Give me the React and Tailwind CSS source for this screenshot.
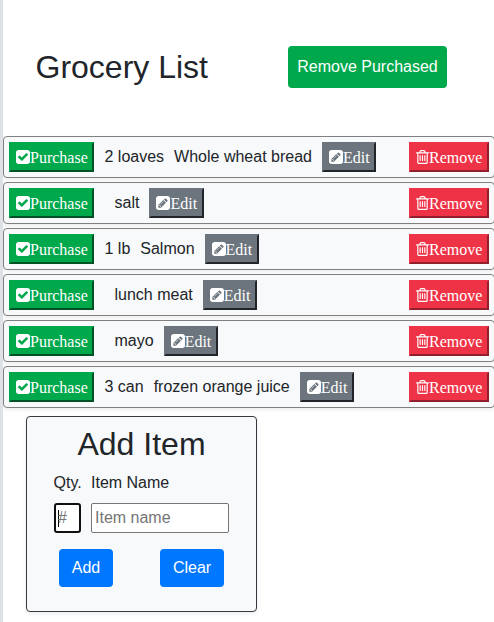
const items = [
  { qty: "2 loaves", name: "Whole wheat bread" },
  { qty: "", name: "salt" },
  { qty: "1 lb", name: "Salmon" },
  { qty: "", name: "lunch meat" },
  { qty: "", name: "mayo" },
  { qty: "3 can", name: "frozen orange juice" },
];

const small =
  "flex h-[30px] shrink-0 items-center border-2 pl-[5px] font-['Liberation_Serif',serif] text-base leading-6 text-white";

function CheckSquare() {
  return (
    <svg viewBox="128 128 1536 1536" fill="currentColor" className="h-[14px] w-[14px] shrink-0">
      <path d="M813 1299l614-614q19-19 19-45t-19-45l-102-102q-19-19-45-19t-45 19l-467 467-211-211q-19-19-45-19t-45 19l-102 102q-19 19-19 45t19 45l358 358q19 19 45 19t45-19zm851-883v960q0 119-84.5 203.5t-203.5 84.5h-960q-119 0-203.5-84.5t-84.5-203.5v-960q0-119 84.5-203.5t203.5-84.5h960q119 0 203.5 84.5t84.5 203.5z" />
    </svg>
  );
}

function PencilSquare() {
  return (
    <svg viewBox="0 0 1536 1536" fill="currentColor" className="h-[14px] w-[14px] shrink-0">
      <path d="M404 980l152 152-52 52h-56v-96h-96v-56zm414-390q14 13-3 30l-291 291q-17 17-30 3-14-13 3-30l291-291q17-17 30-3zm-274 690l544-544-288-288-544 544v288h288zm608-608l92-92q28-28 28-68t-28-68l-152-152q-28-28-68-28t-68 28l-92 92zm384-384v960q0 119-84.5 203.5t-203.5 84.5h-960q-119 0-203.5-84.5t-84.5-203.5v-960q0-119 84.5-203.5t203.5-84.5h960q119 0 203.5 84.5t84.5 203.5z" />
    </svg>
  );
}

function Trash() {
  return (
    <svg viewBox="192 128 1408 1536" fill="currentColor" className="h-[14px] w-[13px] shrink-0">
      <path d="M704 736v576q0 14-9 23t-23 9h-64q-14 0-23-9t-9-23v-576q0-14 9-23t23-9h64q14 0 23 9t9 23zm256 0v576q0 14-9 23t-23 9h-64q-14 0-23-9t-9-23v-576q0-14 9-23t23-9h64q14 0 23 9t9 23zm256 0v576q0 14-9 23t-23 9h-64q-14 0-23-9t-9-23v-576q0-14 9-23t23-9h64q14 0 23 9t9 23zm128 724v-948h-896v948q0 22 7 40.5t14.5 27 10.5 8.5h832q3 0 10.5-8.5t14.5-27 7-40.5zm-672-1076h448l-48-117q-7-9-17-11h-317q-10 2-17 11zm928 32v64q0 14-9 23t-23 9h-96v948q0 83-47 143.5t-113 60.5h-832q-66 0-113-58.5t-47-141.5v-952h-96q-14 0-23-9t-9-23v-64q0-14 9-23t23-9h309l70-167q15-37 54-63t79-26h320q40 0 79 26t54 63l70 167h309q14 0 23 9t9 23z" />
    </svg>
  );
}

function Row({ qty, name }) {
  return (
    <li className="flex h-[42px] items-center rounded border border-[#808080] bg-[#f8f9fa] px-[5px] shadow-[0_2px_4px_rgba(0,0,0,0.075)]">
      <button className={small + " w-[85px] border-t-[#00a84c] border-l-[#00a84c] border-r-[#005224] border-b-[#005224] bg-[#00a84c]"}>
        <CheckSquare />
        <span className="pt-[2px]">Purchase</span>
      </button>
      <span className="ml-[10.5px]">{qty}</span>
      <span className="ml-[10px]">{name}</span>
      <button className={small + " ml-[10px] w-[54.5px] border-t-[#6c757d] border-l-[#6c757d] border-r-[#212529] border-b-[#212529] bg-[#6c757d]"}>
        <PencilSquare />
        <span className="pt-[2px]">Edit</span>
      </button>
      <button className={small + " ml-auto w-[80px] border-t-[#ef3346] border-l-[#ef3346] border-r-[#92202c] border-b-[#92202c] bg-[#ef3346]"}>
        <Trash />
        <span className="pt-[2px]">Remove</span>
      </button>
    </li>
  );
}

export default function App() {
  return (
    <div className="h-[622px] w-[494px] overflow-hidden border-l-[3px] border-[#dee2e6] bg-white font-['Liberation_Sans',Arial,sans-serif] text-base leading-6 text-[#212529]">
      <header className="flex h-[136px] items-start pl-[32.5px]">
        <h1 className="mt-[48px] w-[252.5px] text-[32px] leading-[38px]">Grocery List</h1>
        <button className="mt-[46px] h-[42px] w-[159px] rounded bg-[#00a84c] text-white">Remove Purchased</button>
      </header>
      <ul className="flex w-[492px] flex-col gap-1">
        {items.map((item) => (
          <Row key={item.name} {...item} />
        ))}
      </ul>
      <form className="mt-2 ml-[23px] h-[196px] w-[231px] rounded border border-[#343a40] bg-[#f8f9fa] shadow-[0_2px_4px_rgba(0,0,0,0.075)]">
        <h2 className="mt-[8px] text-center text-[32px] leading-[38px]">Add Item</h2>
        <div className="mt-[8px] ml-[26.5px] flex gap-[10px]">
          <label className="w-[27.5px]">Qty.</label>
          <label>Item Name</label>
        </div>
        <div className="mt-[8px] ml-[27px] flex gap-[10px]">
          <div className="flex h-[30px] w-[27px] items-center rounded-[3px] border-2 border-[#101010] bg-white pl-[2px] text-[#757575]">
            <span className="h-[17px] w-px bg-black" />
            <span className="-ml-px">#</span>
          </div>
          <input
            placeholder="Item name"
            className="h-[30px] w-[138px] rounded-[2px] border border-[#767676] bg-white px-[3px] placeholder:text-[#757575]"
          />
        </div>
        <div className="mt-4 ml-8 flex gap-[47px]">
          <button type="button" className="h-[38px] w-[54px] rounded bg-[#0077ff] text-white">Add</button>
          <button type="button" className="h-[38px] w-[64px] rounded bg-[#0077ff] text-white">Clear</button>
        </div>
      </form>
    </div>
  );
}
